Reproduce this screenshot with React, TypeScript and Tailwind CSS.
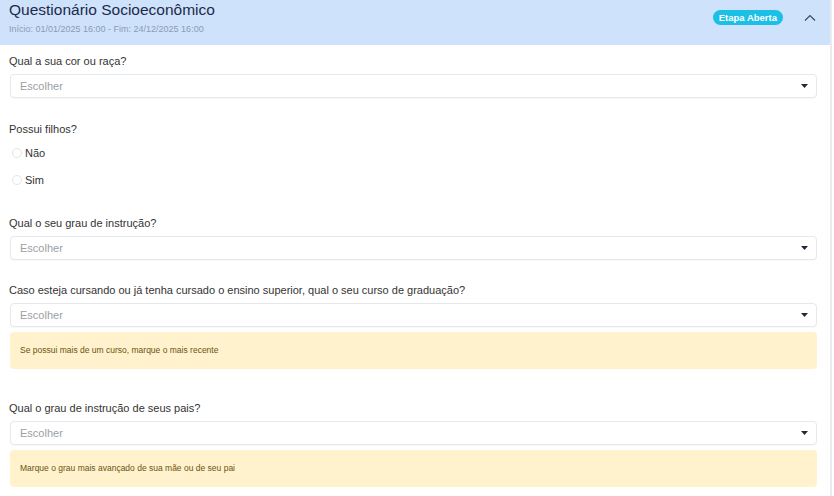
import React from "react";

function Caret() {
  return (
    <svg width="7" height="4" viewBox="0 0 7 4" className="text-gray-800">
      <path d="M0 0 L7 0 L3.5 4 Z" fill="currentColor" />
    </svg>
  );
}

function Select() {
  return (
    <div className="flex h-[24px] items-center justify-between rounded border border-[#e6e8eb] bg-white pl-[9px] pr-[8px] shadow-[0_1px_1px_rgba(0,0,0,0.03)]">
      <span className="text-[11px] text-[#9aa0a6]">Escolher</span>
      <Caret />
    </div>
  );
}

function Alert({ text }: { text: string }) {
  return (
    <div className="mt-[5px] flex h-[37px] items-center rounded bg-[#fff2cc] px-[10px] text-[8.5px] text-[#6b5313]">
      {text}
    </div>
  );
}

function Radio({ label }: { label: string }) {
  return (
    <div className="flex items-center gap-[3px] pl-[12px]">
      <span className="h-[10px] w-[10px] rounded-full border border-[#e3e5e8] bg-white" />
      <span className="text-[11px] text-[#333]">{label}</span>
    </div>
  );
}

function Label({ text, pt }: { text: string; pt: string }) {
  return <div className={`${pt} -ml-px text-[11px] leading-[15px] text-[#333]`}>{text}</div>;
}

export default function App() {
  return (
    <div className="h-[496px] w-[834px] overflow-hidden bg-white font-['Liberation_Sans',Arial,sans-serif]">
      <div className="w-[832px] border-r-2 border-[#e9ebee]">
        <div className="flex h-[45px] items-start justify-between bg-[#cfe2fc] pl-[9px] pr-[14px]">
          <div>
            <div className="text-[15.5px] leading-[20px] text-[#1b2a49]">Questionário Socioeconômico</div>
            <div className="mt-[3px] text-[9px] text-[#8a9bb3]">Início: 01/01/2025 16:00 - Fim: 24/12/2025 16:00</div>
          </div>
          <div className="flex items-center gap-[21px] pt-[10px]">
            <span className="rounded-full bg-[#1cbfe6] px-[6px] py-[1px] text-[9.5px] font-bold leading-[13px] text-white">Etapa Aberta</span>
            <svg width="12" height="7" viewBox="0 0 12 7" className="text-[#3b4a63]">
              <path d="M1 6.5 L6 1.5 L11 6.5" fill="none" stroke="currentColor" strokeWidth="1.2" />
            </svg>
          </div>
        </div>

        <div className="pl-[10px] pr-[13px]">
          <Label pt="pt-[9px]" text="Qual a sua cor ou raça?" />
          <div className="mt-[5px]"><Select /></div>

          <Label pt="pt-[24px]" text="Possui filhos?" />
          <div className="-ml-[10px] mt-[8px] flex flex-col gap-[10px]">
            <Radio label="Não" />
            <Radio label="Sim" />
          </div>

          <Label pt="pt-[28px]" text="Qual o seu grau de instrução?" />
          <div className="mt-[5px]"><Select /></div>

          <Label pt="pt-[23px]" text="Caso esteja cursando ou já tenha cursado o ensino superior, qual o seu curso de graduação?" />
          <div className="mt-[5px]"><Select /></div>
          <Alert text="Se possui mais de um curso, marque o mais recente" />

          <Label pt="pt-[32px]" text="Qual o grau de instrução de seus pais?" />
          <div className="mt-[5px]"><Select /></div>
          <Alert text="Marque o grau mais avançado de sua mãe ou de seu pai" />
        </div>
        <div className="h-[20px]" />
      </div>
    </div>
  );
}
